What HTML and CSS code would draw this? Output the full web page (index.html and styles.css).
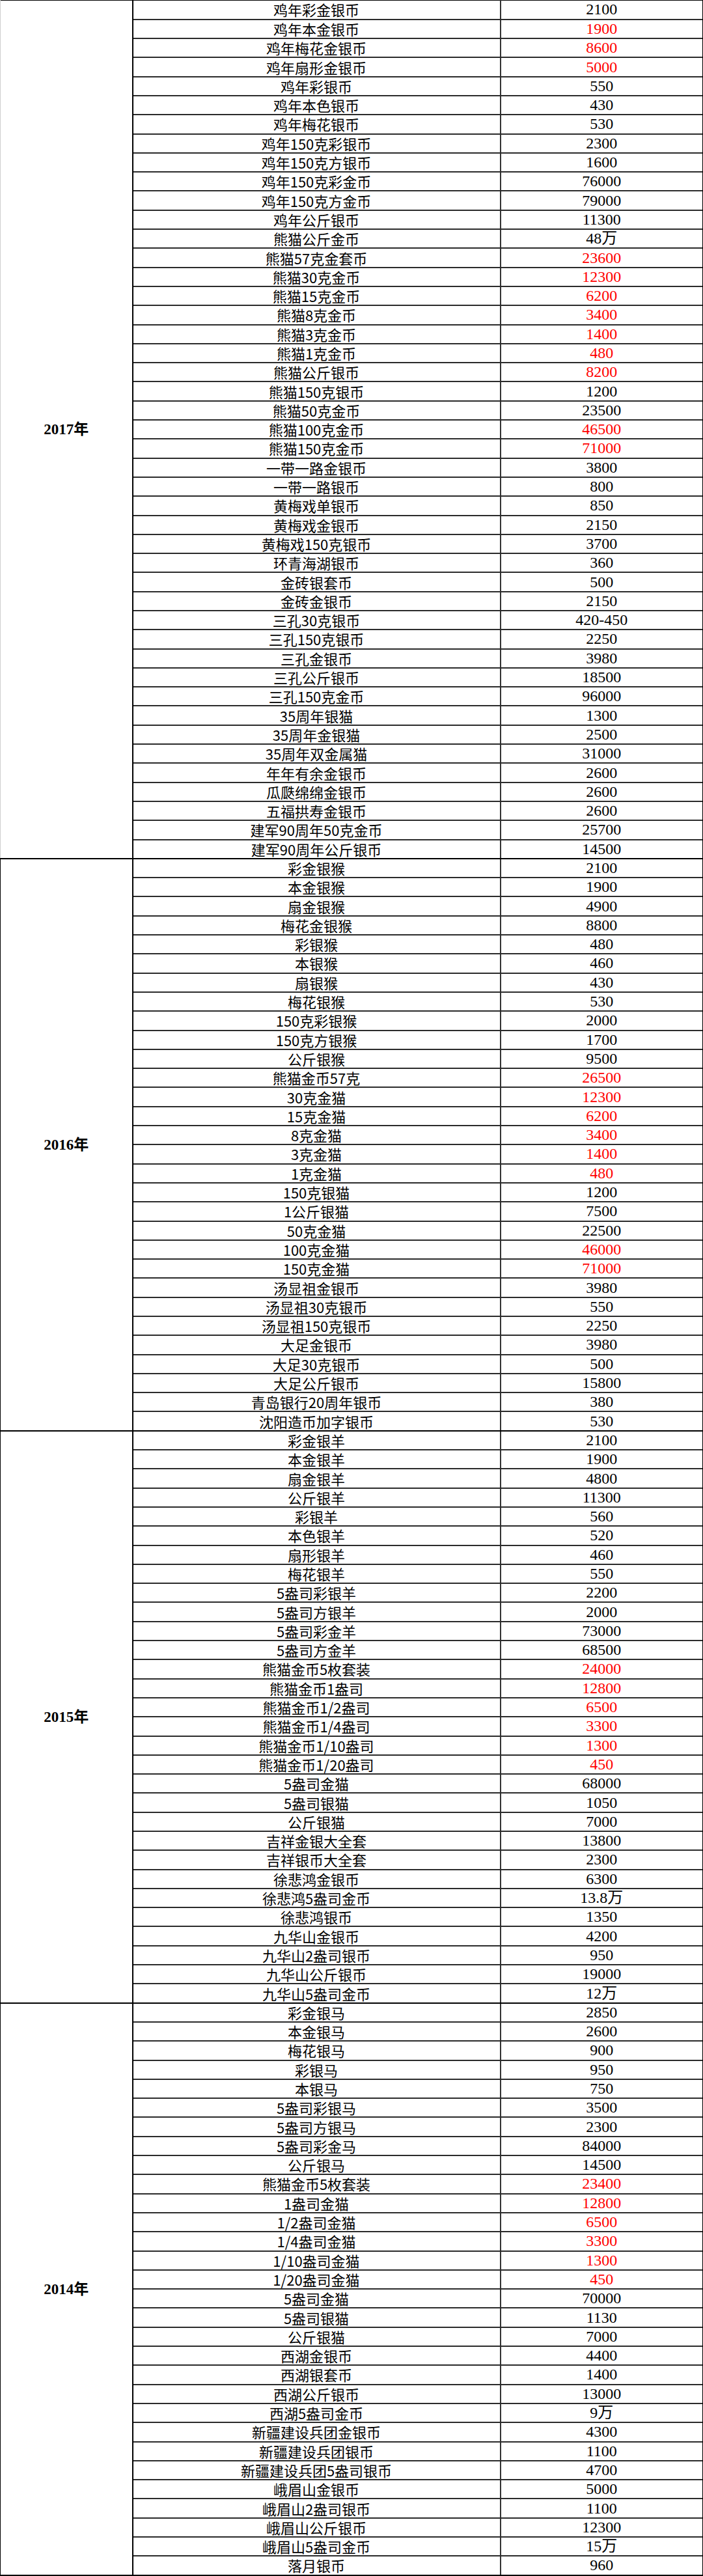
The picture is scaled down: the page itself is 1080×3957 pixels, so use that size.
FILE: index.html
```html
<!DOCTYPE html>
<html lang="zh-CN">
<head>
<meta charset="utf-8">
<title>金银币价格表</title>
<link rel="stylesheet" href="styles.css">
</head>
<body>
<table class="price-table">
<colgroup><col class="c-year"><col class="c-name"><col class="c-price"></colgroup>
<tbody class="g2017">
<tr><td class="year" rowspan="45">2017年</td><td class="name">鸡年彩金银币</td><td class="price">2100</td></tr>
<tr><td class="name">鸡年本金银币</td><td class="price r">1900</td></tr>
<tr><td class="name">鸡年梅花金银币</td><td class="price r">8600</td></tr>
<tr><td class="name">鸡年扇形金银币</td><td class="price r">5000</td></tr>
<tr><td class="name">鸡年彩银币</td><td class="price">550</td></tr>
<tr><td class="name">鸡年本色银币</td><td class="price">430</td></tr>
<tr><td class="name">鸡年梅花银币</td><td class="price">530</td></tr>
<tr><td class="name">鸡年150克彩银币</td><td class="price">2300</td></tr>
<tr><td class="name">鸡年150克方银币</td><td class="price">1600</td></tr>
<tr><td class="name">鸡年150克彩金币</td><td class="price">76000</td></tr>
<tr><td class="name">鸡年150克方金币</td><td class="price">79000</td></tr>
<tr><td class="name">鸡年公斤银币</td><td class="price">11300</td></tr>
<tr><td class="name">熊猫公斤金币</td><td class="price">48万</td></tr>
<tr><td class="name">熊猫57克金套币</td><td class="price r">23600</td></tr>
<tr><td class="name">熊猫30克金币</td><td class="price r">12300</td></tr>
<tr><td class="name">熊猫15克金币</td><td class="price r">6200</td></tr>
<tr><td class="name">熊猫8克金币</td><td class="price r">3400</td></tr>
<tr><td class="name">熊猫3克金币</td><td class="price r">1400</td></tr>
<tr><td class="name">熊猫1克金币</td><td class="price r">480</td></tr>
<tr><td class="name">熊猫公斤银币</td><td class="price r">8200</td></tr>
<tr><td class="name">熊猫150克银币</td><td class="price">1200</td></tr>
<tr><td class="name">熊猫50克金币</td><td class="price">23500</td></tr>
<tr><td class="name">熊猫100克金币</td><td class="price r">46500</td></tr>
<tr><td class="name">熊猫150克金币</td><td class="price r">71000</td></tr>
<tr><td class="name">一带一路金银币</td><td class="price">3800</td></tr>
<tr><td class="name">一带一路银币</td><td class="price">800</td></tr>
<tr><td class="name">黄梅戏单银币</td><td class="price">850</td></tr>
<tr><td class="name">黄梅戏金银币</td><td class="price">2150</td></tr>
<tr><td class="name">黄梅戏150克银币</td><td class="price">3700</td></tr>
<tr><td class="name">环青海湖银币</td><td class="price">360</td></tr>
<tr><td class="name">金砖银套币</td><td class="price">500</td></tr>
<tr><td class="name">金砖金银币</td><td class="price">2150</td></tr>
<tr><td class="name">三孔30克银币</td><td class="price">420-450</td></tr>
<tr><td class="name">三孔150克银币</td><td class="price">2250</td></tr>
<tr><td class="name">三孔金银币</td><td class="price">3980</td></tr>
<tr><td class="name">三孔公斤银币</td><td class="price">18500</td></tr>
<tr><td class="name">三孔150克金币</td><td class="price">96000</td></tr>
<tr><td class="name">35周年银猫</td><td class="price">1300</td></tr>
<tr><td class="name">35周年金银猫</td><td class="price">2500</td></tr>
<tr><td class="name">35周年双金属猫</td><td class="price">31000</td></tr>
<tr><td class="name">年年有余金银币</td><td class="price">2600</td></tr>
<tr><td class="name">瓜瓞绵绵金银币</td><td class="price">2600</td></tr>
<tr><td class="name">五福拱寿金银币</td><td class="price">2600</td></tr>
<tr><td class="name">建军90周年50克金币</td><td class="price">25700</td></tr>
<tr class="last"><td class="name">建军90周年公斤银币</td><td class="price">14500</td></tr>
</tbody>
<tbody>
<tr><td class="year" rowspan="30">2016年</td><td class="name">彩金银猴</td><td class="price">2100</td></tr>
<tr><td class="name">本金银猴</td><td class="price">1900</td></tr>
<tr><td class="name">扇金银猴</td><td class="price">4900</td></tr>
<tr><td class="name">梅花金银猴</td><td class="price">8800</td></tr>
<tr><td class="name">彩银猴</td><td class="price">480</td></tr>
<tr><td class="name">本银猴</td><td class="price">460</td></tr>
<tr><td class="name">扇银猴</td><td class="price">430</td></tr>
<tr><td class="name">梅花银猴</td><td class="price">530</td></tr>
<tr><td class="name">150克彩银猴</td><td class="price">2000</td></tr>
<tr><td class="name">150克方银猴</td><td class="price">1700</td></tr>
<tr><td class="name">公斤银猴</td><td class="price">9500</td></tr>
<tr><td class="name">熊猫金币57克</td><td class="price r">26500</td></tr>
<tr><td class="name">30克金猫</td><td class="price r">12300</td></tr>
<tr><td class="name">15克金猫</td><td class="price r">6200</td></tr>
<tr><td class="name">8克金猫</td><td class="price r">3400</td></tr>
<tr><td class="name">3克金猫</td><td class="price r">1400</td></tr>
<tr><td class="name">1克金猫</td><td class="price r">480</td></tr>
<tr><td class="name">150克银猫</td><td class="price">1200</td></tr>
<tr><td class="name">1公斤银猫</td><td class="price">7500</td></tr>
<tr><td class="name">50克金猫</td><td class="price">22500</td></tr>
<tr><td class="name">100克金猫</td><td class="price r">46000</td></tr>
<tr><td class="name">150克金猫</td><td class="price r">71000</td></tr>
<tr><td class="name">汤显祖金银币</td><td class="price">3980</td></tr>
<tr><td class="name">汤显祖30克银币</td><td class="price">550</td></tr>
<tr><td class="name">汤显祖150克银币</td><td class="price">2250</td></tr>
<tr><td class="name">大足金银币</td><td class="price">3980</td></tr>
<tr><td class="name">大足30克银币</td><td class="price">500</td></tr>
<tr><td class="name">大足公斤银币</td><td class="price">15800</td></tr>
<tr><td class="name">青岛银行20周年银币</td><td class="price">380</td></tr>
<tr class="last"><td class="name">沈阳造币加字银币</td><td class="price">530</td></tr>
</tbody>
<tbody>
<tr><td class="year" rowspan="30">2015年</td><td class="name">彩金银羊</td><td class="price">2100</td></tr>
<tr><td class="name">本金银羊</td><td class="price">1900</td></tr>
<tr><td class="name">扇金银羊</td><td class="price">4800</td></tr>
<tr><td class="name">公斤银羊</td><td class="price">11300</td></tr>
<tr><td class="name">彩银羊</td><td class="price">560</td></tr>
<tr><td class="name">本色银羊</td><td class="price">520</td></tr>
<tr><td class="name">扇形银羊</td><td class="price">460</td></tr>
<tr><td class="name">梅花银羊</td><td class="price">550</td></tr>
<tr><td class="name">5盎司彩银羊</td><td class="price">2200</td></tr>
<tr><td class="name">5盎司方银羊</td><td class="price">2000</td></tr>
<tr><td class="name">5盎司彩金羊</td><td class="price">73000</td></tr>
<tr><td class="name">5盎司方金羊</td><td class="price">68500</td></tr>
<tr><td class="name">熊猫金币5枚套装</td><td class="price r">24000</td></tr>
<tr><td class="name">熊猫金币1盎司</td><td class="price r">12800</td></tr>
<tr><td class="name">熊猫金币1/2盎司</td><td class="price r">6500</td></tr>
<tr><td class="name">熊猫金币1/4盎司</td><td class="price r">3300</td></tr>
<tr><td class="name">熊猫金币1/10盎司</td><td class="price r">1300</td></tr>
<tr><td class="name">熊猫金币1/20盎司</td><td class="price r">450</td></tr>
<tr><td class="name">5盎司金猫</td><td class="price">68000</td></tr>
<tr><td class="name">5盎司银猫</td><td class="price">1050</td></tr>
<tr><td class="name">公斤银猫</td><td class="price">7000</td></tr>
<tr><td class="name">吉祥金银大全套</td><td class="price">13800</td></tr>
<tr><td class="name">吉祥银币大全套</td><td class="price">2300</td></tr>
<tr><td class="name">徐悲鸿金银币</td><td class="price">6300</td></tr>
<tr><td class="name">徐悲鸿5盎司金币</td><td class="price">13.8万</td></tr>
<tr><td class="name">徐悲鸿银币</td><td class="price">1350</td></tr>
<tr><td class="name">九华山金银币</td><td class="price">4200</td></tr>
<tr><td class="name">九华山2盎司银币</td><td class="price">950</td></tr>
<tr><td class="name">九华山公斤银币</td><td class="price">19000</td></tr>
<tr class="last"><td class="name">九华山5盎司金币</td><td class="price">12万</td></tr>
</tbody>
<tbody>
<tr><td class="year" rowspan="30">2014年</td><td class="name">彩金银马</td><td class="price">2850</td></tr>
<tr><td class="name">本金银马</td><td class="price">2600</td></tr>
<tr><td class="name">梅花银马</td><td class="price">900</td></tr>
<tr><td class="name">彩银马</td><td class="price">950</td></tr>
<tr><td class="name">本银马</td><td class="price">750</td></tr>
<tr><td class="name">5盎司彩银马</td><td class="price">3500</td></tr>
<tr><td class="name">5盎司方银马</td><td class="price">2300</td></tr>
<tr><td class="name">5盎司彩金马</td><td class="price">84000</td></tr>
<tr><td class="name">公斤银马</td><td class="price">14500</td></tr>
<tr><td class="name">熊猫金币5枚套装</td><td class="price r">23400</td></tr>
<tr><td class="name">1盎司金猫</td><td class="price r">12800</td></tr>
<tr><td class="name">1/2盎司金猫</td><td class="price r">6500</td></tr>
<tr><td class="name">1/4盎司金猫</td><td class="price r">3300</td></tr>
<tr><td class="name">1/10盎司金猫</td><td class="price r">1300</td></tr>
<tr><td class="name">1/20盎司金猫</td><td class="price r">450</td></tr>
<tr><td class="name">5盎司金猫</td><td class="price">70000</td></tr>
<tr><td class="name">5盎司银猫</td><td class="price">1130</td></tr>
<tr><td class="name">公斤银猫</td><td class="price">7000</td></tr>
<tr><td class="name">西湖金银币</td><td class="price">4400</td></tr>
<tr><td class="name">西湖银套币</td><td class="price">1400</td></tr>
<tr><td class="name">西湖公斤银币</td><td class="price">13000</td></tr>
<tr><td class="name">西湖5盎司金币</td><td class="price">9万</td></tr>
<tr><td class="name">新疆建设兵团金银币</td><td class="price">4300</td></tr>
<tr><td class="name">新疆建设兵团银币</td><td class="price">1100</td></tr>
<tr><td class="name">新疆建设兵团5盎司银币</td><td class="price">4700</td></tr>
<tr><td class="name">峨眉山金银币</td><td class="price">5000</td></tr>
<tr><td class="name">峨眉山2盎司银币</td><td class="price">1100</td></tr>
<tr><td class="name">峨眉山公斤银币</td><td class="price">12300</td></tr>
<tr><td class="name">峨眉山5盎司金币</td><td class="price">15万</td></tr>
<tr class="last"><td class="name">落月银币</td><td class="price">960</td></tr>
</tbody>
</table>
</body>
</html>
```

FILE: styles.css
```css
html, body {
  margin: 0;
  padding: 0;
  background: #ffffff;
}

.price-table {
  width: 1080px;
  border-collapse: collapse;
  table-layout: fixed;
  border-top: 1px solid #000;
  border-right: 3px solid #000;
  border-bottom: 2px solid #000;
  border-left: 1px solid #000;
}

.c-year { width: 203px; }
.c-name { width: 565px; }
.c-price { width: 312px; }

.price-table tr {
  height: 29.3px;
}

.price-table td {
  padding: 0;
  text-align: center;
  vertical-align: middle;
  line-height: 27px;
  color: #000;
  white-space: nowrap;
}

.g2017 .year {
  border-left: 1px solid #cfcfcf;
}

.price-table .year {
  font-family: "Liberation Serif", "Noto Sans CJK SC", serif;
  font-weight: bold;
  font-size: 23px;
  border-right: 2px solid #000;
  border-bottom: 2px solid #000;
}

.price-table .name {
  font-family: "Noto Sans CJK SC", "Noto Sans", sans-serif;
  font-size: 22px;
  border-bottom: 2px solid #2b2b2b;
  border-right: 2px solid #333;
}

.price-table .price {
  font-family: "Liberation Serif", "Noto Sans CJK SC", serif;
  font-size: 24px;
  border-bottom: 2px solid #2b2b2b;
}

.price-table .last .name,
.price-table .last .price {
  border-bottom: 2px solid #000;
}

.price-table td.r {
  color: #ff0000;
}
```
